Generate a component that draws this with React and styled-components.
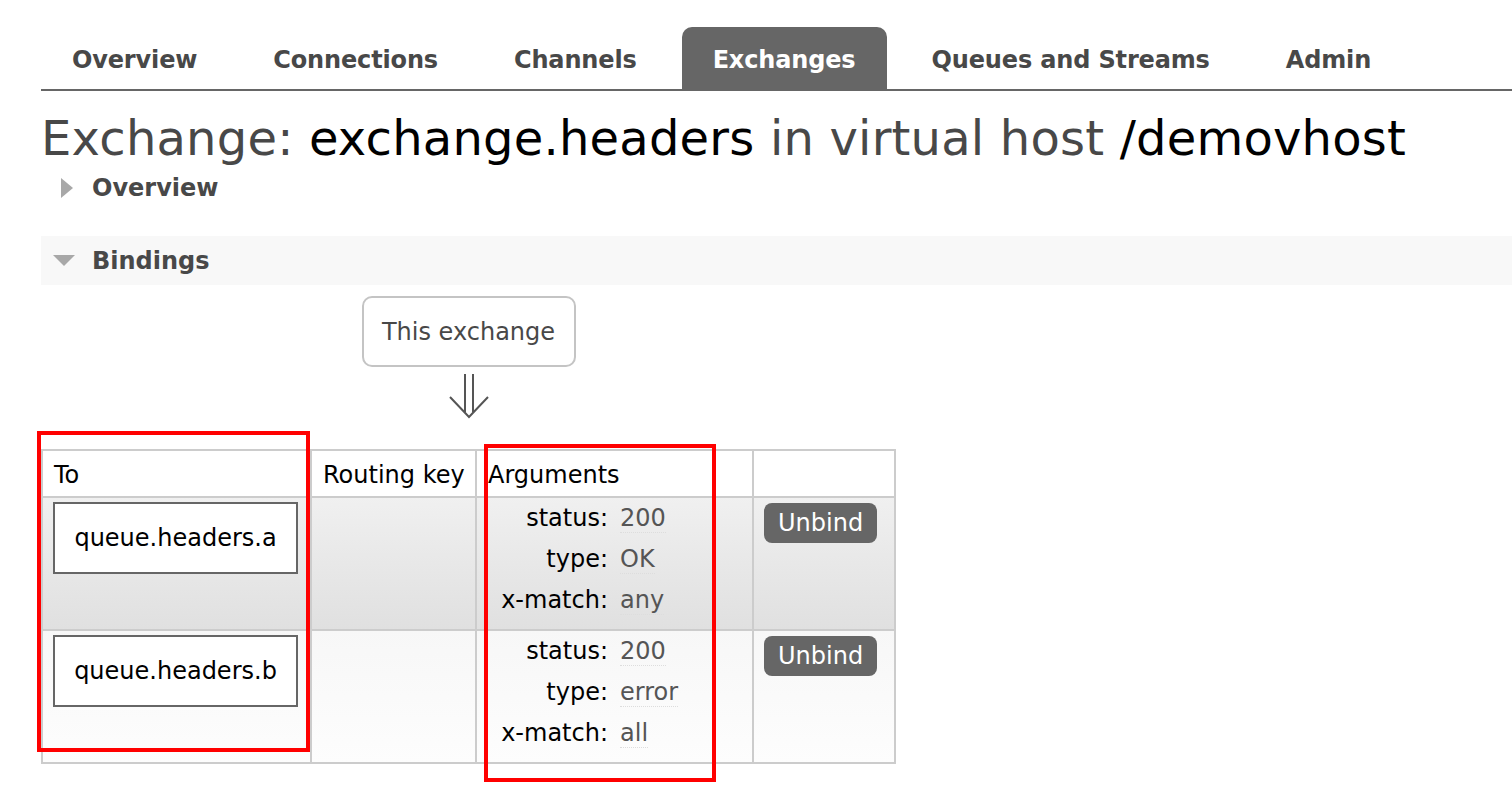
import React from "react";
import styled, { createGlobalStyle, css } from "styled-components";

const GlobalStyle = createGlobalStyle`
  body {
    margin: 0;
    background: #fff;
    font-family: "DejaVu Sans", Verdana, sans-serif;
    color: #484848;
  }
`;

const Page = styled.div`
  padding: 27px 0 40px 41px;
`;

const Nav = styled.ul`
  display: flex;
  gap: 14px;
  margin: 0;
  padding: 0;
  list-style: none;
  border-bottom: 2px solid #666;
`;

const Tab = styled.li`
  box-sizing: border-box;
  height: 62px;
  padding: 4px 31px 0;
  display: flex;
  align-items: center;
  font-size: 24px;
  font-weight: bold;
  letter-spacing: -0.15px;
  color: #484848;
  border-radius: 10px 10px 0 0;

  ${props =>
    props.active &&
    css`
      background: #666;
      color: #fff;
    `};
`;

const Title = styled.h1`
  margin: 20px 0 0;
  font-size: 48px;
  line-height: 54px;
  letter-spacing: 0.2px;
  font-weight: normal;
  color: #484848;
  white-space: nowrap;
`;

const Em = styled.b`
  font-weight: normal;
  color: #000;
`;

const SectionHead = styled.h2`
  display: flex;
  align-items: center;
  margin: ${props => (props.open ? "30px 0 0" : "5px 0 0")};
  height: ${props => (props.open ? "49px" : "36px")};
  padding-left: ${props => (props.open ? "12px" : "20px")};
  background: ${props => (props.open ? "#f8f8f8" : "transparent")};
  font-size: 24px;
  font-weight: bold;
  color: #484848;
`;

const Caret = styled.span`
  display: inline-block;
  width: 0;
  height: 0;
  margin-right: ${props => (props.open ? "17px" : "19px")};
  ${props =>
    props.open
      ? css`
          border-left: 11px solid transparent;
          border-right: 11px solid transparent;
          border-top: 11px solid #a8a8a8;
        `
      : css`
          border-top: 10px solid transparent;
          border-bottom: 10px solid transparent;
          border-left: 12px solid #a8a8a8;
        `};
`;

const Bindings = styled.div`
  position: relative;
  display: inline-flex;
  flex-direction: column;
  align-items: center;
  padding-top: 11px;
`;

const Source = styled.div`
  box-sizing: border-box;
  width: 214px;
  height: 71px;
  display: flex;
  align-items: center;
  justify-content: center;
  border: 2px solid #c4c4c4;
  border-radius: 10px;
  font-size: 24px;
  color: #484848;
`;

const Arrow = styled.svg`
  display: block;
  margin: 5px 0 29px;
`;

const Table = styled.table`
  table-layout: fixed;
  width: 853px;
  border-collapse: collapse;
  border: 2px solid #ccc;
  font-size: 24px;
  color: #000;
`;

const Th = styled.th`
  height: 42px;
  padding: 3px 11px 0;
  border: 2px solid #ccc;
  text-align: left;
  font-weight: normal;
  white-space: nowrap;
  vertical-align: middle;
  background: #fff;
`;

const Row = styled.tr`
  background: ${props =>
    props.alt
      ? "linear-gradient(to bottom, #f7f7f7, #fdfdfd)"
      : "linear-gradient(to bottom, #f0f0f0, #e0e0e0)"};
`;

const Td = styled.td`
  height: ${props => (props.args ? "131px" : "127px")};
  padding: ${props => (props.args ? "0" : "4px 11px 0 10px")};
  border: 2px solid #ccc;
  vertical-align: top;
`;

const Target = styled.span`
  box-sizing: border-box;
  display: flex;
  align-items: center;
  justify-content: center;
  width: 245px;
  height: 72px;
  border: 2px solid #666;
  background: #fff;
  color: #000;
`;

const Args = styled.div`
  display: grid;
  grid-template-columns: 131px auto;
  column-gap: 12px;
  line-height: 41px;
`;

const Key = styled.span`
  text-align: right;
  color: #000;
`;

const Value = styled.span`
  justify-self: start;
  align-self: start;
  margin-top: 6px;
  color: #555;
  line-height: 28px;
  border-bottom: 1px dotted #ddd;
`;

const Button = styled.button`
  height: 40px;
  margin-top: 1px;
  padding: 0 14px;
  border: 0;
  border-radius: 8px;
  background: #666;
  color: #fff;
  font-family: "DejaVu Sans", Verdana, sans-serif;
  font-size: 24px;
`;

const Mark = styled.div`
  position: absolute;
  border: 4px solid #f00;
  box-sizing: border-box;
  pointer-events: none;
`;

const tabs = ["Overview", "Connections", "Channels", "Exchanges", "Queues and Streams", "Admin"];

const bindings = [
  { queue: "queue.headers.a", args: [["status", "200"], ["type", "OK"], ["x-match", "any"]] },
  { queue: "queue.headers.b", args: [["status", "200"], ["type", "error"], ["x-match", "all"]] },
];

const App = () => {
  return (
    <Page>
      <GlobalStyle />
      <Nav>
        {tabs.map(t => (
          <Tab key={t} active={t === "Exchanges"}>
            {t}
          </Tab>
        ))}
      </Nav>
      <Title>
        Exchange: <Em>exchange.headers</Em> in virtual host <Em>/demovhost</Em>
      </Title>
      <SectionHead>
        <Caret />
        Overview
      </SectionHead>
      <SectionHead open>
        <Caret open />
        Bindings
      </SectionHead>
      <Bindings>
        <Source>This exchange</Source>
        <Arrow width="42" height="48" viewBox="0 0 42 48">
          <g fill="none" stroke="#555" strokeWidth="2">
            <line x1="17" y1="2" x2="17" y2="40" />
            <line x1="25" y1="2" x2="25" y2="40" />
            <polyline points="2,25 21,45 40,25" />
          </g>
        </Arrow>
        <Table>
          <colgroup>
            <col style={{ width: 269 }} />
            <col style={{ width: 165 }} />
            <col style={{ width: 277 }} />
            <col style={{ width: 142 }} />
          </colgroup>
          <thead>
            <tr>
              <Th>To</Th>
              <Th>Routing key</Th>
              <Th>Arguments</Th>
              <Th />
            </tr>
          </thead>
          <tbody>
            {bindings.map((b, i) => (
              <Row key={b.queue} alt={i === 1}>
                <Td>
                  <Target>{b.queue}</Target>
                </Td>
                <Td />
                <Td args>
                  <Args>
                    {b.args.map(([k, v]) => (
                      <React.Fragment key={k}>
                        <Key>{k}:</Key>
                        <Value>{v}</Value>
                      </React.Fragment>
                    ))}
                  </Args>
                </Td>
                <Td>
                  <Button>Unbind</Button>
                </Td>
              </Row>
            ))}
          </tbody>
        </Table>
        <Mark style={{ left: -4, top: 146, width: 273, height: 321 }} />
        <Mark style={{ left: 443, top: 159, width: 232, height: 338 }} />
      </Bindings>
    </Page>
  );
};

export default App;
